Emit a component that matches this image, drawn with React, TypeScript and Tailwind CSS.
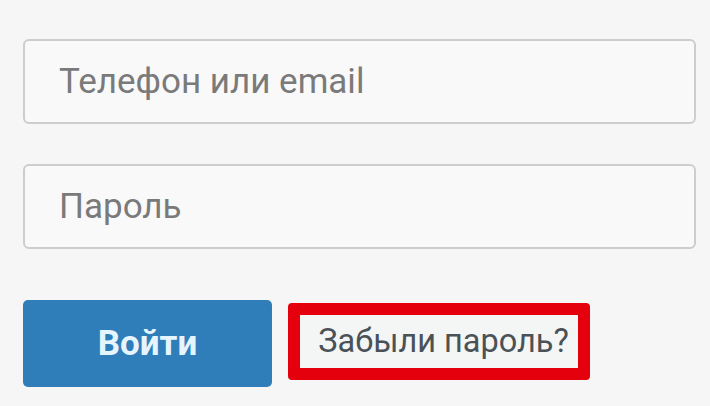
import React from "react";

export default function App() {
  return (
    <div
      className="w-[710px] h-[406px] bg-[#f6f6f6] overflow-hidden pl-[23px] pt-[39px]"
      style={{ fontFamily: "Roboto, 'Noto Sans', sans-serif" }}
    >
      <div className="flex flex-col w-[673px]">
        <div className="h-[85px] rounded-[6px] border-2 border-[#cdcdcd] bg-[#f9f9f9] flex items-center pl-[34px]">
          <span className="text-[35px] text-[#7a7a7a] leading-none">Телефон или email</span>
        </div>
        <div className="h-[85px] mt-[40px] rounded-[6px] border-2 border-[#cdcdcd] bg-[#f9f9f9] flex items-center pl-[34px]">
          <span className="text-[35px] text-[#7a7a7a] leading-none">Пароль</span>
        </div>
        <div className="flex items-start mt-[51px]">
          <div className="w-[249px] h-[87px] rounded-[5px] bg-[#2f7db9] flex items-center justify-center">
            <span className="text-[35px] font-bold text-[#e6f5fd] leading-none">Войти</span>
          </div>
          <div className="ml-[16px] mt-[3px] w-[302px] h-[77px] rounded-[4px] border-[12px] border-[#e4000c] bg-[#f4f5f5] flex items-center justify-center pl-[9px]">
            <span className="text-[32.5px] text-[#4a5157] leading-none">Забыли пароль?</span>
          </div>
        </div>
      </div>
    </div>
  );
}
